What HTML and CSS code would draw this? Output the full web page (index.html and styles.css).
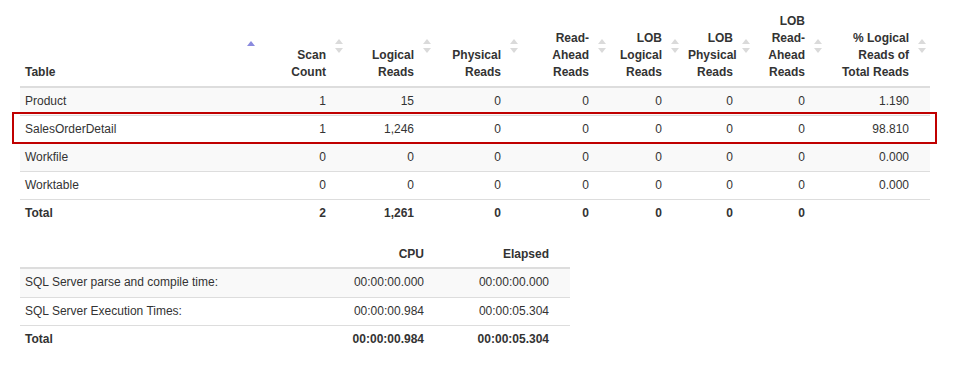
FILE: index.html
```html
<!DOCTYPE html>
<html>
<head>
<meta charset="utf-8">
<link rel="stylesheet" href="styles.css">
</head>
<body>
<div class="page">
  <div class="io-wrap">
    <table class="grid io">
      <colgroup>
        <col class="c-table"><col class="c-88"><col class="c-88"><col class="c-87"><col class="c-88"><col class="c-73"><col class="c-71"><col class="c-72"><col class="c-104">
      </colgroup>
      <thead>
        <tr>
          <th class="left sort-asc">Table</th>
          <th class="sort">Scan Count</th>
          <th class="sort">Logical Reads</th>
          <th class="sort">Physical Reads</th>
          <th class="sort">Read-Ahead Reads</th>
          <th class="sort">LOB Logical Reads</th>
          <th class="sort">LOB Physical Reads</th>
          <th class="sort">LOB Read-Ahead Reads</th>
          <th class="sort">% Logical Reads of Total Reads</th>
        </tr>
      </thead>
      <tbody>
        <tr class="odd"><td class="left">Product</td><td>1</td><td>15</td><td>0</td><td>0</td><td>0</td><td>0</td><td>0</td><td>1.190</td></tr>
        <tr><td class="left">SalesOrderDetail</td><td>1</td><td>1,246</td><td>0</td><td>0</td><td>0</td><td>0</td><td>0</td><td>98.810</td></tr>
        <tr class="odd"><td class="left">Workfile</td><td>0</td><td>0</td><td>0</td><td>0</td><td>0</td><td>0</td><td>0</td><td>0.000</td></tr>
        <tr><td class="left">Worktable</td><td>0</td><td>0</td><td>0</td><td>0</td><td>0</td><td>0</td><td>0</td><td>0.000</td></tr>
      </tbody>
      <tfoot>
        <tr><td class="left">Total</td><td>2</td><td>1,261</td><td>0</td><td>0</td><td>0</td><td>0</td><td>0</td><td></td></tr>
      </tfoot>
    </table>
    <div class="highlight"></div>
  </div>

  <table class="grid times">
    <colgroup>
      <col class="t-label"><col class="t-cpu"><col class="t-el">
    </colgroup>
    <thead>
      <tr><th class="left"></th><th>CPU</th><th>Elapsed</th></tr>
    </thead>
    <tbody>
      <tr class="odd"><td class="left">SQL Server parse and compile time:</td><td>00:00:00.000</td><td>00:00:00.000</td></tr>
      <tr><td class="left">SQL Server Execution Times:</td><td>00:00:00.984</td><td>00:00:05.304</td></tr>
    </tbody>
    <tfoot>
      <tr><td class="left">Total</td><td>00:00:00.984</td><td>00:00:05.304</td></tr>
    </tfoot>
  </table>
</div>
</body>
</html>
```

FILE: styles.css
```css
html, body {
  margin: 0;
  padding: 0;
  background: #fff;
}
body {
  font-family: "Liberation Sans", Arial, sans-serif;
  font-size: 12px;
  line-height: 1.42857;
  color: #333;
}
.page {
  padding: 9px 20px 0 20px;
}
.io-wrap {
  position: relative;
  width: 910px;
}
.grid {
  border-collapse: collapse;
  border-spacing: 0;
  table-layout: fixed;
}
.io { width: 910px; }
.c-table { width: 239px; }
.c-88 { width: 88px; }
.c-87 { width: 87px; }
.c-73 { width: 73px; }
.c-71 { width: 71px; }
.c-72 { width: 72px; }
.c-104 { width: 104px; }

.grid th {
  font-weight: bold;
  text-align: right;
  vertical-align: bottom;
  padding: 4px 21px 4px 5px;
  border-bottom: 2px solid #ddd;
  position: relative;
}
.grid td {
  text-align: right;
  padding: 5px 21px 5px 5px;
  border-top: 1px solid #ddd;
  white-space: nowrap;
}
.grid tbody tr:first-child td { border-top: 0; }
.grid th.left, .grid td.left { text-align: left; }
.grid tr.odd td { background: #f9f9f9; }
.grid tfoot td { font-weight: bold; }

.sort::before, .sort::after, .sort-asc::after {
  content: "";
  position: absolute;
  right: 4px;
  top: 50%;
  width: 0;
  height: 0;
  border-left: 4.5px solid transparent;
  border-right: 4.5px solid transparent;
}
.sort::before {
  margin-top: -8px;
  border-bottom: 5px solid #dadada;
}
.sort::after {
  margin-top: 1px;
  border-top: 5px solid #dadada;
}
.sort-asc::after {
  margin-top: -6px;
  border-left-width: 4px;
  border-right-width: 4px;
  border-bottom: 5px solid #8a8ade;
}

.highlight {
  position: absolute;
  left: -8px;
  top: 103px;
  width: 921px;
  height: 28px;
  border: 2px solid #c00000;
  pointer-events: none;
}

.times {
  width: 550px;
  margin-top: 14px;
}
.t-label { width: 280px; }
.t-cpu { width: 145px; }
.t-el { width: 125px; }
.times th { padding-top: 5px; }
```
